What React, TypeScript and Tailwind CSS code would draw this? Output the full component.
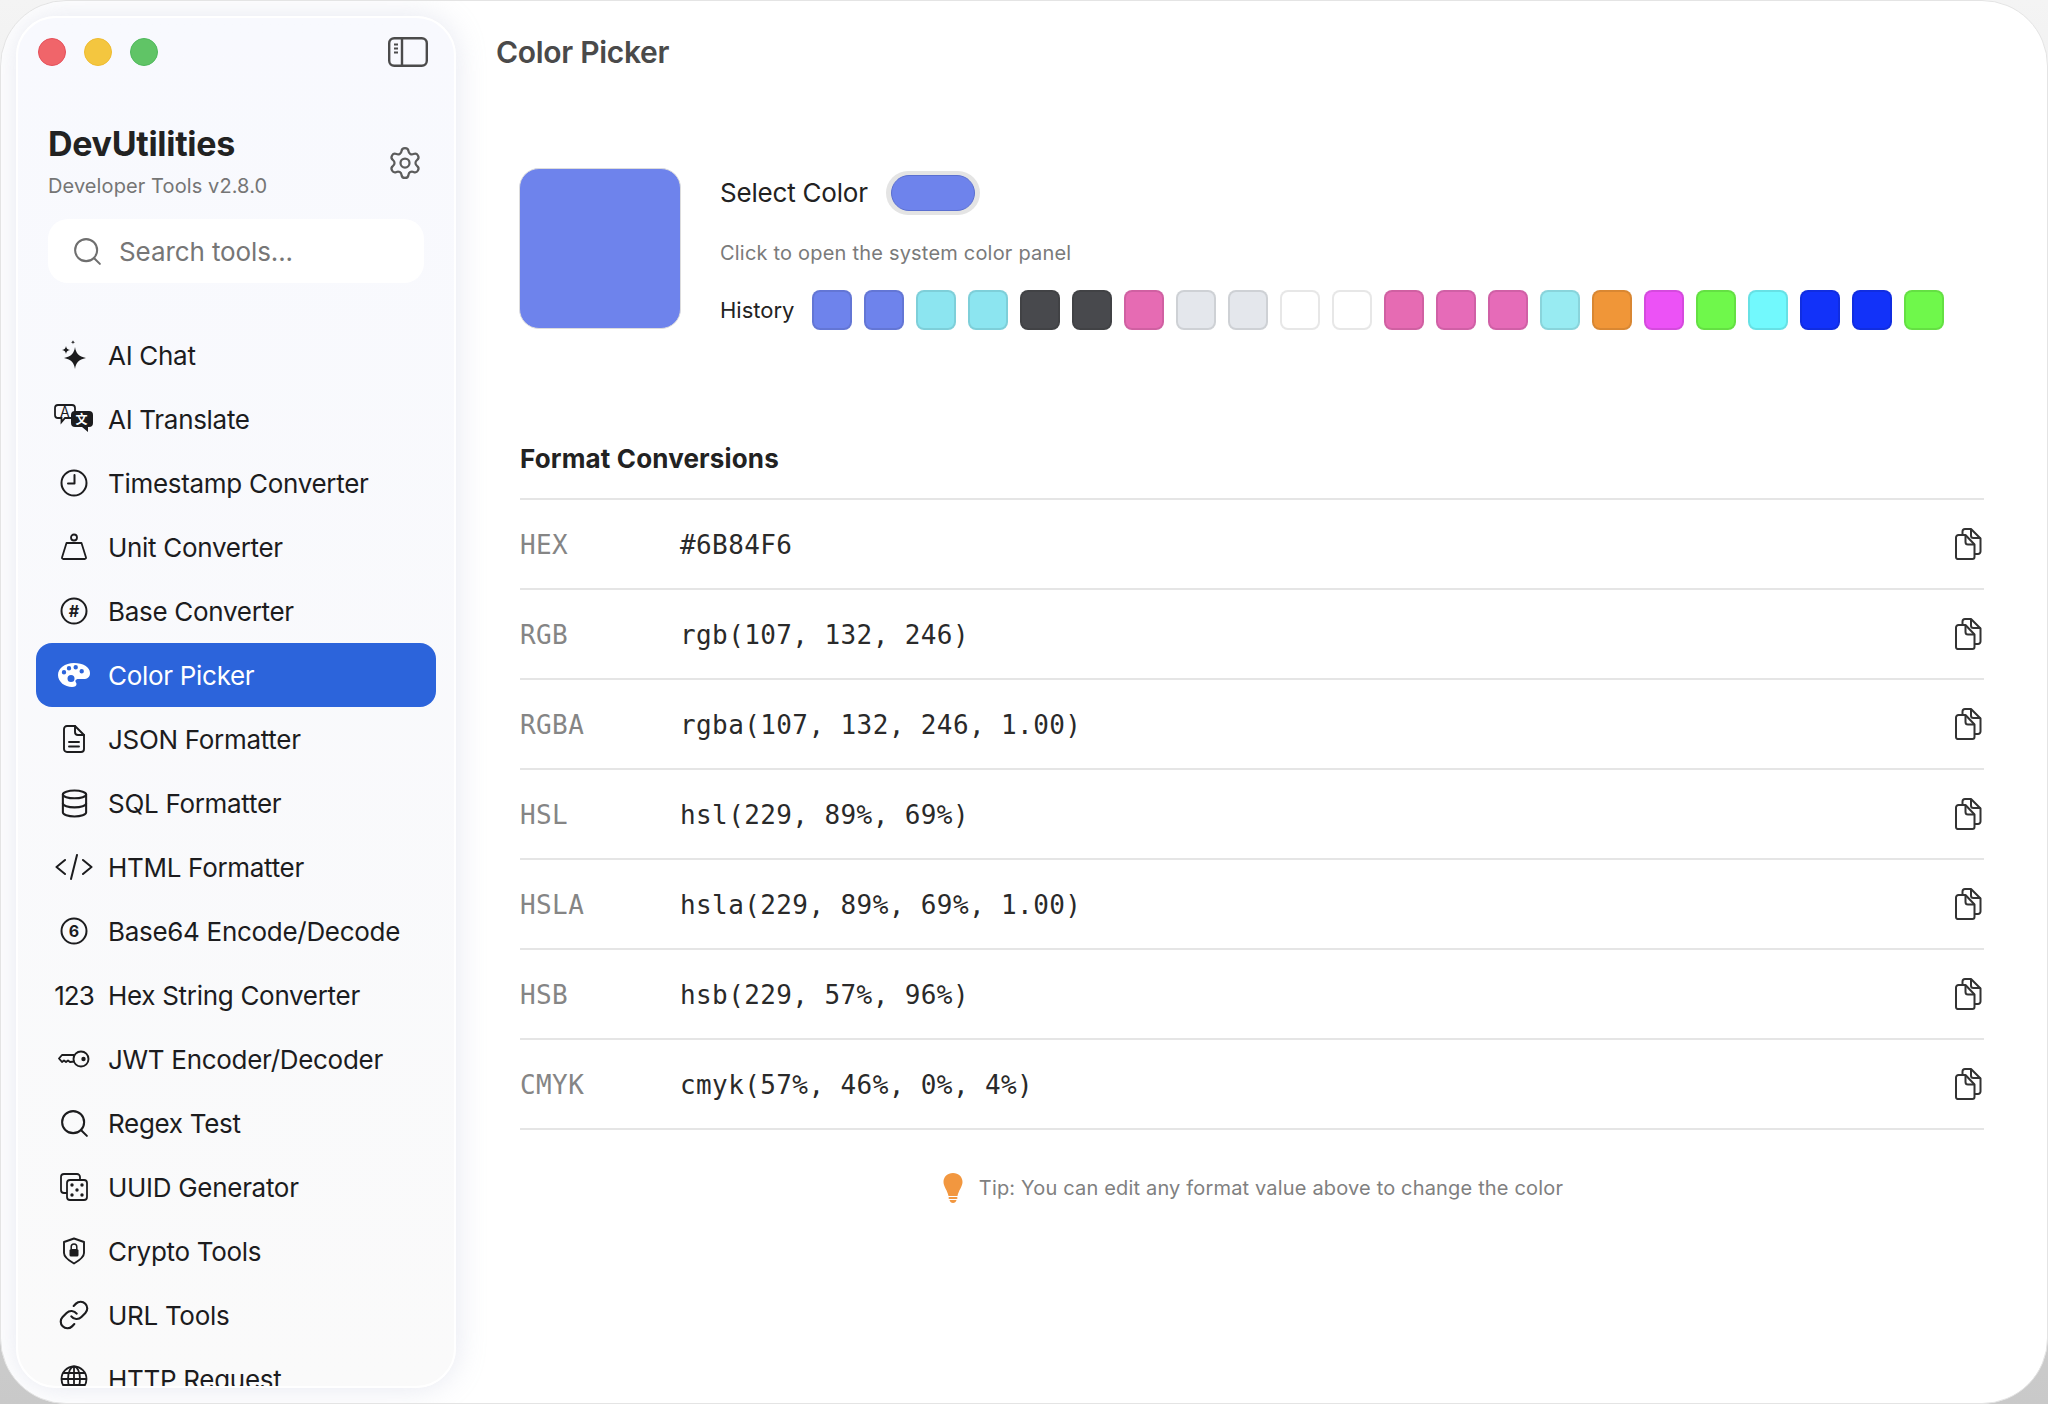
import React from "react";
import { Search, Settings, Database, Link } from "lucide-react";

const ink = "#1c1c1e";

function SparkIcon() {
  return (
    <svg width="26" height="30" viewBox="0 0 26 30" fill={ink}>
      <path d="M14 7c.9 6 3.500 9.500 11 11-7.500 1.500-10.100 5-11 11-.9-6-3.500-9.500-11-11 7.500-1.500 10.100-5 11-11z" />
      <path d="M5 6c.4 2.500 1.300 3.500 4 4-2.700.5-3.600 1.500-4 4-.4-2.500-1.300-3.500-4-4 2.700-.5 3.600-1.500 4-4z" />
      <path d="M12 0c.2 1.500.7 2 2.200 2.200-1.500.2-2 .7-2.200 2.200-.2-1.500-.7-2-2.200-2.200C11.300 2 11.800 1.500 12 0z" />
    </svg>
  );
}

function TranslateIcon() {
  return (
    <svg width="40" height="30" viewBox="0 0 40 30">
      <path d="M4 1h14a3 3 0 0 1 3 3v7a3 3 0 0 1-3 3h-7l-3.500 4v-4H4a3 3 0 0 1-3-3V4a3 3 0 0 1 3-3z" fill="#fafafe" stroke={ink} strokeWidth="1.800" />
      <text x="6" y="13" fontSize="14" fontFamily="Inter, sans-serif" fill={ink}>A</text>
      <path d="M21 7h14a4 4 0 0 1 4 4v8a4 4 0 0 1-4 4h-1v5l-6-5h-7a4 4 0 0 1-4-4v-8a4 4 0 0 1 4-4z" fill={ink} />
      <text x="21.500" y="20" fontSize="12" fontWeight="700" fontFamily="Noto Sans CJK SC, sans-serif" fill="#fff">文</text>
    </svg>
  );
}

function ClockIcon() {
  return (
    <svg width="28" height="28" viewBox="0 0 28 28" fill="none" stroke={ink} strokeWidth="2" strokeLinecap="round" strokeLinejoin="round">
      <circle cx="14" cy="14" r="12.500" />
      <path d="M14.500 6v8.500H8" />
    </svg>
  );
}

function WeightIcon() {
  return (
    <svg width="28" height="28" viewBox="0 0 28 28" fill="none" stroke={ink} strokeWidth="1.800" strokeLinejoin="round">
      <circle cx="14" cy="4.500" r="3" />
      <path d="M6.500 10h15l4.500 14.500a1.200 1.200 0 0 1-1.200 1.500H3.200A1.200 1.200 0 0 1 2 24.500L6.500 10z" />
    </svg>
  );
}

function CircleText({ label }: { label: string }) {
  return (
    <svg width="28" height="28" viewBox="0 0 28 28">
      <circle cx="14" cy="14" r="12.500" fill="none" stroke={ink} strokeWidth="2" />
      <text x="14" y="20" textAnchor="middle" fontSize="16" fontWeight="700" fontFamily="Inter, sans-serif" fill={ink}>
        {label}
      </text>
    </svg>
  );
}

function PaletteIcon() {
  return (
    <svg width="32" height="24" viewBox="0 0 32 24" fill="#fff">
      <path
        fillRule="evenodd"
        d="M16 0C7 0 0 5 0 12c0 7 7 12 14 12 3 0 4.500-1 4.500-3 0-1.500-1.500-2-1-3.500.4-1 1.500-1.500 3-1.500h5c4 0 6.500-2 6.500-6C32 4 25 0 16 0zM6 11.500a2.200 2.200 0 1 1 0-4.400 2.200 2.200 0 0 1 0 4.400zm5-4a2.200 2.200 0 1 1 0-4.400 2.200 2.200 0 0 1 0 4.400zm6.700-1a2.200 2.200 0 1 1 0-4.400 2.200 2.200 0 0 1 0 4.400zm6 4a2.200 2.200 0 1 1 0-4.400 2.200 2.200 0 0 1 0 4.400zM13 19a3.500 3.500 0 1 1 0-7 3.500 3.500 0 0 1 0 7z"
      />
    </svg>
  );
}

function DocIcon() {
  return (
    <svg width="22" height="28" viewBox="0 0 22 28" fill="none" stroke={ink} strokeWidth="1.900" strokeLinejoin="round" strokeLinecap="round">
      <path d="M4 1h8l9 9v14a3 3 0 0 1-3 3H4a3 3 0 0 1-3-3V4a3 3 0 0 1 3-3z" />
      <path d="M12 1v6a3 3 0 0 0 3 3h6" />
      <path d="M6 17h10M6 21.500h10" />
    </svg>
  );
}

function CodeIcon() {
  return (
    <svg width="38" height="26" viewBox="0 0 38 26" fill="none" stroke={ink} strokeWidth="2" strokeLinecap="round" strokeLinejoin="round">
      <path d="M10 6l-8.500 7 8.500 7M28 6l8.500 7-8.500 7M22 1l-6 24" />
    </svg>
  );
}

function KeyIcon() {
  return (
    <svg width="32" height="18" viewBox="0 0 32 18" fill="none" stroke={ink} strokeWidth="1.900" strokeLinejoin="round">
      <path d="M16.500 5H4L1 8.500 4 12l2-1.500 2 1.500 2-1.500 2 1.500 4.500-.5" />
      <circle cx="23" cy="9" r="7.500" />
      <circle cx="25.500" cy="9" r="2.200" fill={ink} stroke="none" />
    </svg>
  );
}

function DiceIcon() {
  return (
    <svg width="28" height="28" viewBox="0 0 28 28" fill="none" stroke={ink} strokeWidth="1.800" strokeLinejoin="round">
      <path d="M20 7V4a3 3 0 0 0-3-3H4a3 3 0 0 0-3 3v13a3 3 0 0 0 3 3h3" />
      <rect x="7" y="7" width="20" height="20" rx="3" />
      <g fill={ink} stroke="none">
        <circle cx="12" cy="12" r="1.700" />
        <circle cx="22" cy="12" r="1.700" />
        <circle cx="17" cy="17" r="1.700" />
        <circle cx="12" cy="22" r="1.700" />
        <circle cx="22" cy="22" r="1.700" />
      </g>
    </svg>
  );
}

function ShieldLockIcon() {
  return (
    <svg width="24" height="28" viewBox="0 0 24 28" fill="none" stroke={ink} strokeWidth="1.900" strokeLinejoin="round">
      <path d="M12 1.500l10 3.500v11c0 3.500-3 6.500-10 10.500C5 22.500 2 19.500 2 16V5l10-3.500z" />
      <rect x="7.500" y="12" width="9" height="7.500" rx="1.500" fill={ink} stroke="none" />
      <path d="M9.200 12V9.800a2.800 2.800 0 0 1 5.600 0V12" strokeWidth="1.500" />
    </svg>
  );
}

function GlobeIcon() {
  return (
    <svg width="28" height="28" viewBox="0 0 28 28" fill="none" stroke={ink} strokeWidth="1.800">
      <circle cx="14" cy="14" r="12.500" />
      <ellipse cx="14" cy="14" rx="6" ry="12.500" />
      <path d="M14 1.500v25M3 8h22M1.500 14h25M3 20h22" />
    </svg>
  );
}

function PanelIcon() {
  return (
    <svg width="40" height="30" viewBox="0 0 40 30" fill="none" stroke="#4b4b4b" strokeWidth="2.400">
      <rect x="1.200" y="1.200" width="37.600" height="27.600" rx="5" />
      <path d="M14 1.200v27.600" />
      <path d="M6 7.500h4M6 11.500h4M6 15.500h4" strokeWidth="1.800" />
    </svg>
  );
}

function CopyIcon() {
  return (
    <svg width="27" height="32" viewBox="0 0 27 32" fill="none" stroke="#333" strokeWidth="2" strokeLinejoin="round">
      <path d="M7.500 7V3.500A2.500 2.500 0 0 1 10 1h6l9.500 9.500v13a2.500 2.500 0 0 1-2.500 2.500h-3.500" />
      <path d="M16 1v6.500a2.500 2.500 0 0 0 2.500 2.500h7" />
      <path d="M3.500 7h7l9 9.500v12.500a2 2 0 0 1-2 2h-14a2 2 0 0 1-2.500-2V9.500A2.500 2.500 0 0 1 3.500 7z" fill="#fff" />
      <path d="M10.500 7v7a2.500 2.500 0 0 0 2.500 2.500h6.500" />
    </svg>
  );
}

function BulbIcon() {
  return (
    <svg width="20" height="30" viewBox="0 0 20 30" fill="#f2973f">
      <path d="M10 0C4.500 0 .5 3.800.5 9c0 4.500 4 8.500 5 14h9c1-5.500 5-9.500 5-14 0-5.200-4-9-9.500-9z" />
      <rect x="5.500" y="24" width="9" height="2" rx="1" />
      <path d="M6.500 27h7c-.4 1.700-1.800 3-3.500 3s-3.100-1.300-3.500-3z" />
    </svg>
  );
}

const navItems: { label: string; icon: React.ReactNode; active?: boolean }[] = [
  { label: "AI Chat", icon: <SparkIcon /> },
  { label: "AI Translate", icon: <TranslateIcon /> },
  { label: "Timestamp Converter", icon: <ClockIcon /> },
  { label: "Unit Converter", icon: <WeightIcon /> },
  { label: "Base Converter", icon: <CircleText label="#" /> },
  { label: "Color Picker", icon: <PaletteIcon />, active: true },
  { label: "JSON Formatter", icon: <DocIcon /> },
  { label: "SQL Formatter", icon: <Database size={31} strokeWidth={1.6} color={ink} /> },
  { label: "HTML Formatter", icon: <CodeIcon /> },
  { label: "Base64 Encode/Decode", icon: <CircleText label="6" /> },
  { label: "Hex String Converter", icon: <span className="text-[26px] tracking-[-1px] text-[#1c1c1e]">123</span> },
  { label: "JWT Encoder/Decoder", icon: <KeyIcon /> },
  { label: "Regex Test", icon: <Search size={33} strokeWidth={1.5} color={ink} /> },
  { label: "UUID Generator", icon: <DiceIcon /> },
  { label: "Crypto Tools", icon: <ShieldLockIcon /> },
  { label: "URL Tools", icon: <Link size={32} strokeWidth={1.6} color={ink} /> },
  { label: "HTTP Request", icon: <GlobeIcon /> },
];

const history = [
  "#6E83EC", "#6E83EC", "#8CE5F0", "#8CE5F0", "#48494D", "#48494D", "#E66BB3", "#E4E7EC",
  "#E4E7EC", "#FFFFFF", "#FFFFFF", "#E66BB3", "#E66BB8", "#E66BB8", "#98EBF2", "#F09638",
  "#EC52F6", "#6FF84B", "#72F9FD", "#1232F9", "#1232F9", "#6FF84B",
];

const formats = [
  { name: "HEX", value: "#6B84F6" },
  { name: "RGB", value: "rgb(107, 132, 246)" },
  { name: "RGBA", value: "rgba(107, 132, 246, 1.00)" },
  { name: "HSL", value: "hsl(229, 89%, 69%)" },
  { name: "HSLA", value: "hsla(229, 89%, 69%, 1.00)" },
  { name: "HSB", value: "hsb(229, 57%, 96%)" },
  { name: "CMYK", value: "cmyk(57%, 46%, 0%, 4%)" },
];

function Sidebar() {
  return (
    <aside className="flex h-[1372px] w-[440px] shrink-0 flex-col overflow-hidden rounded-[40px] border-2 border-white bg-gradient-to-b from-[#f8f9fe] to-[#fafafa] shadow-[0_0_30px_rgba(170,175,205,0.3)]">
      <div className="flex shrink-0 items-center justify-between pl-5 pr-[26px] pt-[19px]">
        <div className="flex gap-[18px]">
          <div className="h-7 w-7 rounded-full border border-[#e5505a] bg-[#f0656a]" />
          <div className="h-7 w-7 rounded-full border border-[#eebb30] bg-[#f4c63f]" />
          <div className="h-7 w-7 rounded-full border border-[#4fb85c] bg-[#60c466]" />
        </div>
        <PanelIcon />
      </div>
      <div className="flex shrink-0 items-center justify-between pl-[30px] pr-[31px] pt-[56px]">
        <div>
          <h1 className="text-[34px] leading-[42px] font-bold tracking-[-0.3px] text-[#222]">DevUtilities</h1>
          <p className="mt-[9px] text-[20px] leading-6 tracking-[0.1px] text-[#757575]">Developer Tools v2.8.0</p>
        </div>
        <Settings size={36} strokeWidth={1.5} color="#5c5c5c" className="mt-1" />
      </div>
      <div className="mx-[30px] mt-[21px] flex h-16 shrink-0 items-center gap-[15px] rounded-[20px] bg-white pl-[23px]">
        <Search size={33} strokeWidth={1.5} color="#6f6f6f" />
        <span className="text-[26px] tracking-[-0.1px] text-[#767676]">Search tools...</span>
      </div>
      <nav className="mx-[18px] mt-[40px] flex shrink-0 flex-col">
        {navItems.map((item) => (
          <div
            key={item.label}
            className={`flex h-16 shrink-0 items-center rounded-2xl ${item.active ? "bg-[#2c64db] text-white" : "text-[#1c1c1e]"}`}
          >
            <span className="flex w-[76px] shrink-0 justify-center">{item.icon}</span>
            <span className="ml-[-4px] mt-[2px] text-[26px] leading-8 tracking-[-0.3px]">{item.label}</span>
          </div>
        ))}
      </nav>
    </aside>
  );
}

function App() {
  return (
    <div className="h-[1404px] w-full overflow-hidden bg-gradient-to-b from-[#f4f4f4] to-[#c9c9c9] font-['Inter',sans-serif]">
      <div className="flex h-full w-full overflow-hidden rounded-[66px] border border-[#e4e4e4] bg-white p-[15px]">
        <Sidebar />
        <main className="min-w-0 flex-1 pl-[40px] pr-[48px]">
          <h2 className="mt-[18px] text-[30px] leading-9 font-semibold tracking-[-0.3px] text-[#4a4a4a]">Color Picker</h2>
          <div className="ml-[24px]">
            <section className="mt-[98px] flex">
              <div className="ml-[-1px] h-[161px] w-[162px] shrink-0 rounded-[20px] border border-[#dcdcdc] bg-[#6e83ec]" />
              <div className="ml-[39px] pt-[3px]">
                <div className="flex h-[44px] items-center">
                  <span className="mt-[-2px] text-[26px] tracking-[-0.2px] text-[#222]">Select Color</span>
                  <div className="ml-[18px] flex h-[44px] w-[94px] items-center justify-center rounded-full bg-[#e4e4e4]">
                    <div className="h-[36px] w-[84px] rounded-full border border-[#5a6fd0] bg-[#6e83ec]" />
                  </div>
                </div>
                <p className="mt-[26px] text-[20px] leading-6 tracking-[0.2px] text-[#7a7a7a]">Click to open the system color panel</p>
                <div className="mt-[25px] flex items-center">
                  <span className="w-[92px] text-[22px] text-[#222]">History</span>
                  <div className="flex gap-3">
                    {history.map((color, i) => (
                      <div
                        key={i}
                        className="h-10 w-10 rounded-lg border-2 border-[#00000018]"
                        style={{ backgroundColor: color }}
                      />
                    ))}
                  </div>
                </div>
              </div>
            </section>
            <h3 className="mt-[113px] text-[26px] leading-8 font-bold tracking-[0.15px] text-[#222]">Format Conversions</h3>
            <div className="mt-[23px] border-t-2 border-[#e5e5e5]">
              {formats.map((row) => (
                <div key={row.name} className="flex h-[90px] items-center border-b-2 border-[#e5e5e5] font-['DejaVu_Sans_Mono',monospace] text-[26px] tracking-[0.4px]">
                  <span className="mt-[2px] w-[160px] shrink-0 text-[#858585]">{row.name}</span>
                  <span className="mt-[2px] flex-1 text-[#2a2a2a]">{row.value}</span>
                  <span className="mr-[2px] flex"><CopyIcon /></span>
                </div>
              ))}
            </div>
            <div className="mt-[43px] flex items-center justify-center gap-[16px] pl-[2px]">
              <BulbIcon />
              <span className="text-[20px] tracking-[0.17px] text-[#808080]">Tip: You can edit any format value above to change the color</span>
            </div>
          </div>
        </main>
      </div>
    </div>
  );
}

export default App;
